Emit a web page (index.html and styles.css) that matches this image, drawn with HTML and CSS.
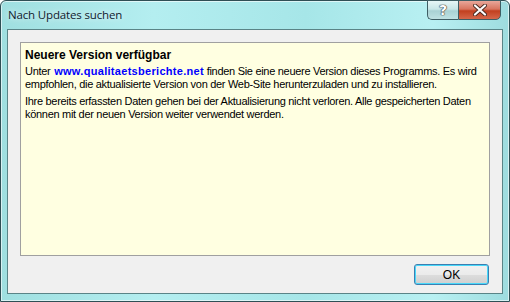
FILE: index.html
```html
<!DOCTYPE html>
<html>
<head>
    <title>Nach Updates suchen</title>
    <link rel="stylesheet" href="styles.css">
</head>
<body>
<div class="window">
    <div class="titlebar">
        <span class="title">Nach Updates suchen</span>
        <div class="caption-buttons">
            <button class="cap-btn help">?</button>
            <button class="cap-btn close">
                <svg width="14" height="12" viewBox="0 0 14 12">
                    <path d="M2 1.5 L12 10.5 M12 1.5 L2 10.5" stroke="#4a2a20" stroke-width="4" stroke-linecap="round"/>
                    <path d="M2 1.5 L12 10.5 M12 1.5 L2 10.5" stroke="#fff" stroke-width="2.2" stroke-linecap="round"/>
                </svg>
            </button>
        </div>
    </div>
    <div class="client">
        <div class="info-panel">
            <p class="headline">Neuere Version verfügbar</p>
            <p>Unter <a class="link" href="#">www.qualitaetsberichte.net</a> finden Sie eine neuere Version dieses Programms. Es wird empfohlen, die aktualisierte Version von der Web-Site herunterzuladen und zu installieren.</p>
            <p>Ihre bereits erfassten Daten gehen bei der Aktualisierung nicht verloren. Alle gespeicherten Daten können mit der neuen Version weiter verwendet werden.</p>
        </div>
        <div class="button-row">
            <button class="ok-btn">OK</button>
        </div>
    </div>
</div>
</body>
</html>
```

FILE: styles.css
```css
body {
    margin: 0;
    background-color: #fff;
}

.window {
    width: 510px;
    height: 302px;
    box-sizing: border-box;
    border: 1px solid #2f4f55;
    border-radius: 6px 6px 0 0;
    background: linear-gradient(90deg, #9fdfe0 0%, #b4eef0 30%, #a6e6e8 60%, #b8f0f2 85%, #9edcdf 100%);
    box-shadow: inset 0 0 0 1px rgba(255, 255, 255, 0.6);
    display: flex;
    flex-direction: column;
}

.titlebar {
    height: 28px;
    display: flex;
    justify-content: space-between;
    align-items: flex-start;
    padding-left: 7px;
    padding-right: 8px;
}

.title {
    font-family: "Open Sans", "Noto Sans", sans-serif;
    font-size: 11.5px;
    letter-spacing: -0.15px;
    color: #10202e;
    margin-top: 6px;
    text-shadow: 0 0 6px rgba(255, 255, 255, 0.9);
}

.caption-buttons {
    display: flex;
    margin-top: -1px;
}

.cap-btn {
    height: 20px;
    border: 1px solid #3e5e64;
    padding: 0;
    display: flex;
    align-items: center;
    justify-content: center;
}

.cap-btn.help {
    width: 31px;
    border-right: none;
    border-radius: 0 0 0 5px;
    background: linear-gradient(180deg, #e6f6f6 0%, #c8e6e7 45%, #a9d2d4 55%, #bfe2e3 100%);
    font-family: "DejaVu Sans", sans-serif;
    font-weight: bold;
    font-size: 14px;
    color: #fff;
    text-shadow: 0 0 1px #333, 0 0 1px #333, 0 0 1px #333;
}

.cap-btn.close {
    width: 43px;
    border-radius: 0 0 5px 0;
    background: linear-gradient(180deg, #e9a79a 0%, #d8755f 45%, #c2401f 55%, #d5674a 100%);
}

.client {
    flex: 1;
    margin: 0 6px 7px 6px;
    border: 1px solid #5a8487;
    background-color: #f0f0f0;
    padding: 12px 12px 8px 12px;
    display: flex;
    flex-direction: column;
}

.info-panel {
    height: 214px;
    box-sizing: border-box;
    border: 1px solid #a0a0a0;
    background-color: #ffffe1;
    padding: 5px 6px 0 4px;
    font-family: "Liberation Sans", Arial, sans-serif;
    font-size: 11px;
    letter-spacing: -0.3px;
    line-height: 13px;
    color: #000;
}

.info-panel p {
    margin: 0 0 4px 0;
}

.info-panel .headline {
    font-weight: bold;
    font-size: 12px;
    letter-spacing: 0;
    line-height: 14px;
    margin-bottom: 3px;
}

.link {
    color: #0000ff;
    font-weight: bold;
    letter-spacing: 0.3px;
    margin-left: 1px;
    text-decoration: none;
}

.button-row {
    display: flex;
    justify-content: flex-end;
    margin-top: 8px;
    padding-right: 1px;
}

.ok-btn {
    width: 75px;
    height: 21px;
    border: 1px solid #3c7fb1;
    border-radius: 3px;
    background: linear-gradient(180deg, #f2f2f2 0%, #ebebeb 50%, #dddddd 51%, #cfcfcf 100%);
    box-shadow: inset 0 0 0 1px #48d8fa;
    font-family: "Liberation Sans", Arial, sans-serif;
    font-size: 12px;
    color: #000;
    padding: 0;
}
```
